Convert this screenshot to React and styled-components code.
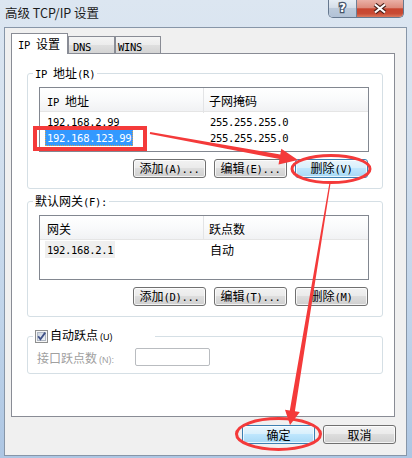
import React from "react";
import styled, { createGlobalStyle } from "styled-components";

const CJK = `"Noto Sans CJK SC", "Liberation Sans", sans-serif`;

const GlobalStyle = createGlobalStyle`
  html, body {
    margin: 0;
    padding: 0;
    background: #ffffff;
  }
  body {
    font-family: ${CJK};
  }
`;

const Window = styled.div`
  position: relative;
  box-sizing: border-box;
  width: 412px;
  height: 458px;
  padding: 0 5px 2px 4px;
  display: flex;
  flex-direction: column;
  background: linear-gradient(180deg, #dce6f1 0%, #d4e1ef 30%, #c0d4ea 70%, #adc6e3 100%);
  font-family: ${CJK};
  font-size: 12px;
  color: #000;
`;

const TitleBar = styled.div`
  height: 27px;
  flex: none;
  display: flex;
  justify-content: space-between;
  align-items: flex-start;
  padding: 0 3px 0 1px;
`;

const Title = styled.div`
  margin-top: 5px;
  font-size: 12.5px;
  line-height: 16px;
  color: #1b1b1b;
`;

const Caption = styled.div`
  display: flex;
  height: 18px;
  box-sizing: border-box;
  border: 1px solid #66788f;
  border-top: none;
  border-radius: 0 0 5px 5px;
  overflow: hidden;
`;

const HelpBtn = styled.div`
  width: 27px;
  display: flex;
  align-items: center;
  justify-content: center;
  background: linear-gradient(180deg, #e6edf4 0%, #d5dee9 45%, #bccadb 50%, #b2c2d6 100%);
  border-right: 1px solid #6e7f95;
`;

const HelpGlyph = styled.span`
  font-family: "DejaVu Sans", sans-serif;
  font-weight: bold;
  font-size: 12px;
  line-height: 13px;
  color: #ffffff;
  -webkit-text-stroke: 2.5px #46546a;
  paint-order: stroke fill;
`;

const CloseBtn = styled.div`
  width: 46px;
  display: flex;
  align-items: center;
  justify-content: center;
  background: linear-gradient(180deg, #eab0a6 0%, #dd8c7d 45%, #c8452f 52%, #c84b35 80%, #dc7a5e 100%);
`;

const Client = styled.div`
  flex: 1;
  display: flex;
  flex-direction: column;
  border: 1px solid #8796a8;
  background: #f0f0f0;
  padding: 5px 11px 0 6px;
`;

const Tabs = styled.div`
  position: relative;
  z-index: 1;
  display: flex;
  align-items: flex-end;
  height: 21px;
  margin-bottom: -1px;
`;

const Tab = styled.div`
  box-sizing: border-box;
  width: ${(p) => p.$w}px;
  height: ${(p) => (p.$active ? 21 : 17)}px;
  margin-bottom: ${(p) => (p.$active ? 0 : 1)}px;
  padding: ${(p) => (p.$active ? 3 : 2)}px 0 0 ${(p) => p.$pl}px;
  border: 1px solid #898c95;
  border-bottom: none;
  background: ${(p) =>
    p.$active
      ? "#ffffff"
      : "linear-gradient(180deg, #f4f4f4 0%, #ececec 50%, #dfdfdf 51%, #d4d4d4 100%)"};
  line-height: 14px;
  white-space: nowrap;
`;

const Panel = styled.div`
  flex: 1;
  display: flex;
  flex-direction: column;
  border: 1px solid #898c95;
  background: #ffffff;
  padding: 12px 11px 0 15px;
`;

const Group = styled.fieldset`
  margin: ${(p) => p.$mt || 0}px 0 0 0;
  min-width: 0;
  border: 1px solid #d5dfe5;
  border-radius: 3px;
  padding: 6px 13px 10px 11px;
`;

const Legend = styled.legend`
  margin-left: -6px;
  padding: 0 2px;
  line-height: 14px;
  font-size: 12px;
`;

const AutoGroup = styled(Group)`
  padding: 5px 13px 7px 9px;
`;

const CheckLegend = styled.legend`
  box-sizing: border-box;
  width: 122px;
  margin-left: -4px;
  padding: 0 2px;
  display: flex;
  align-items: center;
  gap: 2px;
  height: 14px;
  line-height: 14px;
`;

const List = styled.div`
  box-sizing: border-box;
  height: 65px;
  border: 1px solid #828790;
  background: #ffffff;
`;

const HeadRow = styled.div`
  display: grid;
  grid-template-columns: 164px 1fr;
  box-sizing: border-box;
  height: 24px;
  border-bottom: 1px solid #e5e5e5;
  background: linear-gradient(180deg, #ffffff 0%, #f9fafb 50%, #f1f2f4 100%);
`;

const HeadCell = styled.div`
  padding: 2px 0 0 ${(p) => p.$pl}px;
  line-height: 21px;
  white-space: nowrap;
  border-right: ${(p) => (p.$divider ? "1px solid #e3e4e6" : "none")};
`;

const Row = styled.div`
  display: grid;
  grid-template-columns: 164px 1fr;
  height: 16px;
  line-height: 16px;
`;

const Cell = styled.div`
  padding-left: ${(p) => p.$pl}px;
  white-space: nowrap;
`;

const CellText = styled.span`
  display: inline-block;
  padding: 0 2px;
  line-height: 15px;
  vertical-align: middle;
  background: ${(p) =>
    p.$sel === "focus" ? "#3399ff" : p.$sel === "idle" ? "#efefef" : "transparent"};
  color: ${(p) => (p.$sel === "focus" ? "#ffffff" : "#000000")};
  outline: ${(p) => (p.$sel === "focus" ? "1px dotted #d8a050" : "none")};
  outline-offset: -1px;
`;

const ButtonRow = styled.div`
  display: flex;
  justify-content: flex-end;
  gap: 8px;
  margin-top: 7px;
  padding-right: 1px;
`;

const Btn = styled.button`
  box-sizing: border-box;
  width: 73px;
  height: 19px;
  padding: 0;
  border: 1px solid ${(p) => (p.$hot ? "#3c7fb1" : "#707070")};
  border-radius: 3px;
  background: ${(p) =>
    p.$hot
      ? "linear-gradient(180deg, #eaf6fd 0%, #d9f0fc 45%, #bee6fd 50%, #a7d9f5 100%)"
      : "linear-gradient(180deg, #f2f2f2 0%, #ebebeb 45%, #dddddd 50%, #cfcfcf 100%)"};
  box-shadow: inset 0 0 0 1px rgba(255, 255, 255, 0.75);
  font-family: ${CJK};
  font-size: 12px;
  line-height: 16px;
  color: #000;
  white-space: nowrap;
`;

const Footer = styled.div`
  flex: none;
  display: flex;
  justify-content: flex-end;
  gap: 8px;
  padding: 8px 0 11px;
  margin-right: -1px;
`;

// half-width latin run: ~6px advance like the system bitmap font
const Ascii = styled.span`
  font-family: "DejaVu Sans Mono", "Liberation Mono", monospace;
  font-size: 10.5px;
  letter-spacing: -0.3px;
`;

const Tiny = styled.span`
  font-family: "Liberation Sans", sans-serif;
  font-size: 9px;
  margin-left: 2px;
`;

const CheckText = styled.span`
  font-size: 12px;
  color: #000;
  white-space: nowrap;
`;

const MetricRow = styled.div`
  display: flex;
  align-items: center;
  height: 18px;
`;

const MetricLabel = styled.span`
  width: 98px;
  color: #a0a0a0;
  white-space: nowrap;
`;

const MetricInput = styled.div`
  box-sizing: border-box;
  width: 75px;
  height: 18px;
  border: 1px solid #b9bcc0;
  border-radius: 2px;
  background: #ffffff;
`;

const Marks = styled.svg`
  position: absolute;
  left: 0;
  top: 0;
  pointer-events: none;
`;

// wrap ASCII runs so they get the narrow half-width font
const mix = (s) =>
  s.split(/([\x20-\x7e]+)/).map((part, i) =>
    /^[\x20-\x7e]+$/.test(part) ? <Ascii key={i}>{part}</Ascii> : part
  );

const ipRows = [
  ["192.168.2.99", "255.255.255.0", null],
  ["192.168.123.99", "255.255.255.0", "focus"],
];

const gwRows = [["192.168.2.1", "自动", "idle"]];

const ListView = ({ heads, rows }) => (
  <List>
    <HeadRow>
      <HeadCell $pl={7} $divider>{mix(heads[0])}</HeadCell>
      <HeadCell $pl={5}>{mix(heads[1])}</HeadCell>
    </HeadRow>
    {rows.map(([a, b, sel]) => (
      <Row key={a}>
        <Cell $pl={5}>
          <CellText $sel={sel}>{mix(a)}</CellText>
        </Cell>
        <Cell $pl={4}>
          <CellText>{mix(b)}</CellText>
        </Cell>
      </Row>
    ))}
  </List>
);

const Checkbox = () => (
  <svg width="13" height="13" viewBox="0 0 13 13">
    <defs>
      <linearGradient id="cbfill" x1="0" y1="0" x2="1" y2="1">
        <stop offset="0" stopColor="#cbd3df" />
        <stop offset="1" stopColor="#f3f5f8" />
      </linearGradient>
    </defs>
    <rect x="0.5" y="0.5" width="12" height="12" fill="#f6f6f6" stroke="#8e8f8f" />
    <rect x="2.5" y="2.5" width="8" height="8" fill="url(#cbfill)" stroke="#aeb6c3" />
    <path d="M3.2 6.3 L5.4 9.2 L10.2 2.6" fill="none" stroke="#3f5187" strokeWidth="1.8" />
  </svg>
);

const RED = "#f43a3a";

export default function App() {
  return (
    <>
      <GlobalStyle />
      <Window>
        <TitleBar>
          <Title>高级 TCP/IP 设置</Title>
          <Caption>
            <HelpBtn>
              <HelpGlyph>?</HelpGlyph>
            </HelpBtn>
            <CloseBtn>
              <svg width="14" height="11" viewBox="0 0 14 11">
                <path d="M2 1.5 L12 9.5 M12 1.5 L2 9.5" stroke="#4a211b" strokeWidth="4.2" />
                <path d="M2 1.5 L12 9.5 M12 1.5 L2 9.5" stroke="#ffffff" strokeWidth="2.2" />
              </svg>
            </CloseBtn>
          </Caption>
        </TitleBar>

        <Client>
          <Tabs>
            <Tab $active $w={57} $pl={6}>{mix("IP 设置")}</Tab>
            <Tab $w={47} $pl={4}>{mix("DNS")}</Tab>
            <Tab $w={46} $pl={2}>{mix("WINS")}</Tab>
          </Tabs>

          <Panel>
            <Group>
              <Legend>{mix("IP 地址(R)")}</Legend>
              <ListView heads={["IP 地址", "子网掩码"]} rows={ipRows} />
              <ButtonRow>
                <Btn>{mix("添加(A)...")}</Btn>
                <Btn>{mix("编辑(E)...")}</Btn>
                <Btn $hot>{mix("删除(V)")}</Btn>
              </ButtonRow>
            </Group>

            <Group $mt={5}>
              <Legend>{mix("默认网关(F):")}</Legend>
              <ListView heads={["网关", "跃点数"]} rows={gwRows} />
              <ButtonRow>
                <Btn>{mix("添加(D)...")}</Btn>
                <Btn>{mix("编辑(T)...")}</Btn>
                <Btn>{mix("删除(M)")}</Btn>
              </ButtonRow>
            </Group>

            <AutoGroup $mt={12}>
              <CheckLegend>
                <Checkbox />
                <CheckText>
                  自动跃点<Tiny>(U)</Tiny>
                </CheckText>
              </CheckLegend>
              <MetricRow>
                <MetricLabel>
                  接口跃点数<Tiny>(N):</Tiny>
                </MetricLabel>
                <MetricInput />
              </MetricRow>
            </AutoGroup>
          </Panel>

          <Footer>
            <Btn $hot>确定</Btn>
            <Btn>取消</Btn>
          </Footer>
        </Client>

        <Marks width="412" height="458" viewBox="0 0 412 458">
          <rect x="35" y="128" width="110" height="21" fill="none" stroke={RED} strokeWidth="4" />
          <polygon
            fill={RED}
            points="150.2,132.1 280.3,154.5 281.3,148.8 298,160 278.5,164.6 279.5,158.9 149.8,133.9"
          />
          <ellipse cx="331" cy="169" rx="39" ry="13.5" fill="none" stroke={RED} strokeWidth="3" />
          <polygon
            fill={RED}
            points="330.6,183.1 294.9,411.3 299.8,412.1 290,425 285,409.7 289.8,410.5 329.4,182.9"
          />
          <ellipse cx="278.5" cy="434" rx="42" ry="15.5" fill="none" stroke={RED} strokeWidth="3" />
        </Marks>
      </Window>
    </>
  );
}
